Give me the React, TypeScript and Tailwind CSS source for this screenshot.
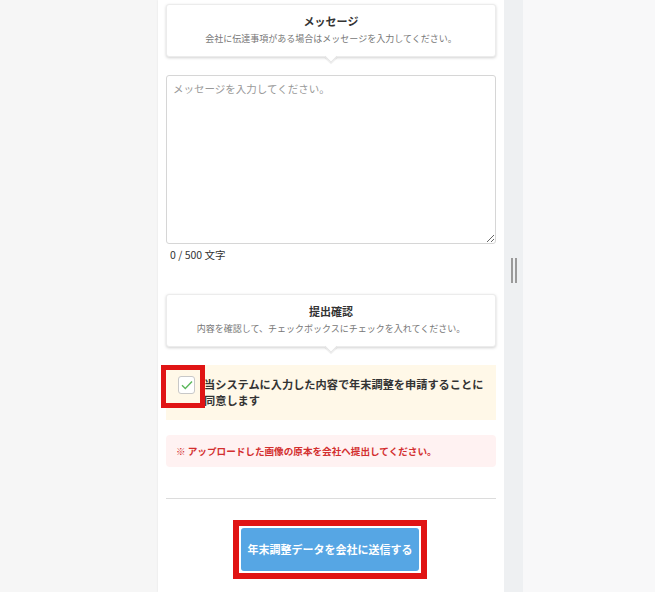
const jp = { fontFamily: '"Noto Sans CJK JP", "Noto Sans", sans-serif' };

function GuideCard({ title, sub }: { title: string; sub: string }) {
  return (
    <div className="relative h-[53px] rounded-[3px] border border-[#ececec] bg-white shadow-[0_1px_3px_rgba(0,0,0,0.18)]">
      <div className="pt-[8px] text-center text-[11px] font-bold leading-[16px] text-[#333]">{title}</div>
      <div className="mt-[4px] text-center text-[9px] leading-[12px] text-[#777]">{sub}</div>
      <div className="absolute bottom-[-5px] left-1/2 h-[9px] w-[9px] -translate-x-1/2 rotate-45 border-b border-r border-[#e4e4e4] bg-white shadow-[1px_1px_1px_rgba(0,0,0,0.08)]" />
    </div>
  );
}

export default function App() {
  return (
    <div className="flex h-[592px] w-full overflow-hidden bg-[#f6f6f6]" style={jp}>
      <div className="w-[158px] shrink-0" />
      <div className="w-[346px] shrink-0 bg-white px-2 pt-[4px] shadow-[0_0_2px_rgba(0,0,0,0.08)]">
        <GuideCard title="メッセージ" sub="会社に伝達事項がある場合はメッセージを入力してください。" />

        <textarea
          className="mt-[18px] block h-[169px] w-full resize-y rounded-[3px] border border-[#d6d6d6] px-[6px] py-[5px] text-[10.5px] leading-[16px] text-[#333] outline-none placeholder:text-[#999]"
          placeholder="メッセージを入力してください。"
        />
        <div className="mt-[4px] pl-[4px] text-[10.5px] leading-[14px] text-[#333]">0 / 500 文字</div>

        <div className="mt-[32px]">
          <GuideCard title="提出確認" sub="内容を確認して、チェックボックスにチェックを入れてください。" />
        </div>

        <div className="mt-[18px] flex h-[55px] items-start bg-[#fff8e8] pl-[12px] pt-[11px]">
          <div className="relative shrink-0">
            <div className="flex h-[18px] w-[17px] items-center justify-center rounded-[3px] border border-[#c8c8c8] bg-white">
              <svg width="12" height="10" viewBox="0 0 12 10" fill="none">
                <path d="M1 5.2 L4.3 8.4 L11 1.4" stroke="#5cb85c" strokeWidth="1.4" />
              </svg>
            </div>
            <div className="absolute left-[-17px] top-[-11px] h-[43px] w-[44px] border-[5px] border-[#e01414]" />
          </div>
          <div className="ml-[9px] text-[11.2px] font-bold leading-[16px] text-[#333]">
            当システムに入力した内容で年末調整を申請することに<br />同意します
          </div>
        </div>

        <div className="mt-[15px] flex h-[32px] items-center rounded-[4px] bg-[#fff2f2] pl-[10px] text-[9.6px] font-bold text-[#d32f2f]">
          ※ アップロードした画像の原本を会社へ提出してください。
        </div>

        <div className="mt-[31px] h-px bg-[#dcdcdc]" />

        <div className="mt-[21px] flex justify-center">
          <div className="ml-[-2px] border-[6px] border-[#e01414] bg-white p-[2px]">
            <button className="flex h-[43px] w-[178px] items-center justify-center rounded-[3px] bg-[#56a6e4] text-[11px] font-bold text-white">
              年末調整データを会社に送信する
            </button>
          </div>
        </div>
      </div>
      <div className="flex w-[19px] shrink-0 items-start justify-center bg-[#eef0f2] pt-[258px]">
        <div className="flex gap-[2px]">
          <div className="h-[25px] w-[2px] bg-[#9a9a9a]" />
          <div className="h-[25px] w-[2px] bg-[#9a9a9a]" />
        </div>
      </div>
      <div className="flex-1 bg-[#f8f8f9]" />
    </div>
  );
}
